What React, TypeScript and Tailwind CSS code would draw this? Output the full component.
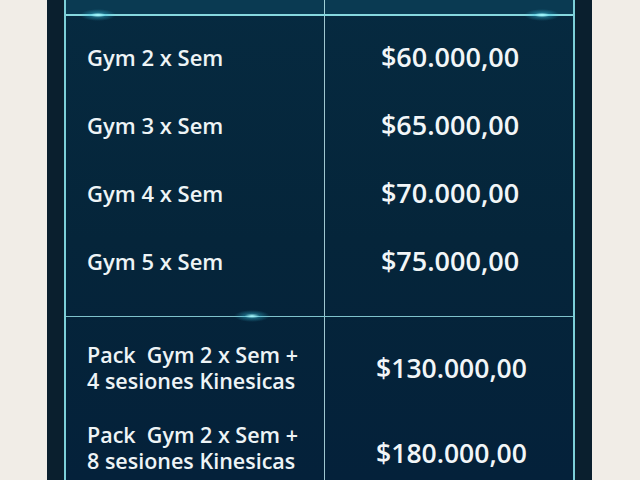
const plans = [
  { name: 'Gym 2 x Sem', price: '$60.000,00' },
  { name: 'Gym 3 x Sem', price: '$65.000,00' },
  { name: 'Gym 4 x Sem', price: '$70.000,00' },
  { name: 'Gym 5 x Sem', price: '$75.000,00' },
];

const packs = [
  { text: 'Pack\u00a0 Gym 2 x Sem +\n4 sesiones Kinesicas', price: '$130.000,00' },
  { text: 'Pack\u00a0 Gym 2 x Sem +\n8 sesiones Kinesicas', price: '$180.000,00' },
];

function Glow({ className }: { className: string }) {
  return (
    <span
      className={
        'pointer-events-none absolute h-[12px] w-[36px] -translate-x-1/2 -translate-y-1/2 rounded-full bg-[radial-gradient(ellipse_at_center,rgba(170,252,255,1)_0%,rgba(60,200,230,0.35)_30%,transparent_70%)] ' +
        className
      }
    />
  );
}

export default function App() {
  return (
    <div
      className="flex h-[480px] w-[640px] overflow-hidden bg-[#f1ede7] pl-[47px]"
      style={{ fontFamily: '"Open Sans", "Noto Sans", sans-serif' }}
    >
      {/* dark frame */}
      <div className="flex h-full w-[545px] shrink-0 bg-[#0a1f2e] px-[17px]">
        {/* table */}
        <div className="relative flex h-full w-[512px] flex-col border-x-2 border-[#7ccfd8] bg-[linear-gradient(180deg,#062a40_0%,#05253a_50%,#04213a_100%)]">
          {/* header strip */}
          <div className="grid h-[16px] shrink-0 grid-cols-[259px_1fr] border-b-2 border-[#86d8df] bg-[#0a3a52]">
            <div className="border-r border-[#9fcfd6]" />
            <div />
          </div>

          {/* regular plans */}
          <div className="grid shrink-0 grid-cols-[259px_1fr] border-b border-[#7fc3cc]">
            <div className="flex flex-col border-r border-[#9fc6cf] pt-[7px] pb-[21px]">
              {plans.map((p) => (
                <div key={p.name} className="flex h-[68px] items-center pl-[21px] text-[22px] font-semibold text-[#eef4f6]">
                  {p.name}
                </div>
              ))}
            </div>
            <div className="flex flex-col pt-[8px] pb-[20px]">
              {plans.map((p) => (
                <div key={p.price} className="flex h-[68px] items-center justify-center pl-[2px] text-[27px] font-semibold text-[#f2f6f8]">
                  <span className="-translate-y-[1px]">{p.price}</span>
                </div>
              ))}
            </div>
          </div>

          {/* packs */}
          <div className="grid flex-1 grid-cols-[259px_1fr]">
            <div className="flex flex-col border-r border-[#9fc6cf] pt-[25px]">
              {packs.map((p) => (
                <div key={p.price} className="h-[80px] shrink-0 whitespace-pre-line pl-[21px] text-[21.5px] font-semibold leading-[26px] text-[#eef4f6]">
                  {p.text}
                </div>
              ))}
            </div>
            <div className="flex flex-col items-center pt-[31px] pl-[5px]">
              <div className="text-[26.5px] font-semibold leading-[40px] text-[#f2f6f8]">{packs[0].price}</div>
              <div className="mt-[45px] text-[26.5px] font-semibold leading-[40px] text-[#f2f6f8]">{packs[1].price}</div>
            </div>
          </div>

          <Glow className="left-[32px] top-[15px]" />
          <Glow className="left-[476px] top-[15px]" />
          <Glow className="left-[186px] top-[316px]" />
        </div>
      </div>
    </div>
  );
}
